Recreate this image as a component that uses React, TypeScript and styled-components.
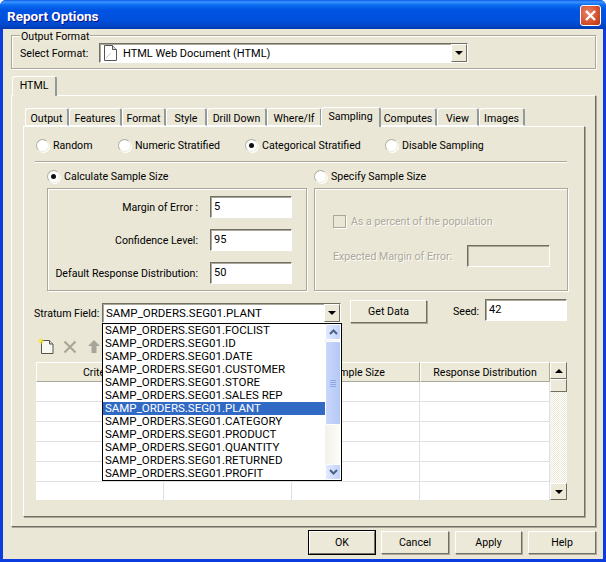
import React from 'react';
import styled, { createGlobalStyle } from 'styled-components';

const GlobalStyle = createGlobalStyle`
  html, body {
    margin: 0;
    padding: 0;
    background: #fff;
  }
  * {
    box-sizing: border-box;
  }
`;

const Face = '#ece9d8';
const Texture = `repeating-conic-gradient(#ece9d8 0 25%, #e8e5d4 0 50%) 0 0 / 2px 2px`;

const Window = styled.div`
  width: 606px;
  height: 562px;
  display: flex;
  flex-direction: column;
  font-family: Roboto, 'Liberation Sans', Arial, sans-serif;
  font-size: 10.6px;
  color: #000;
  overflow: hidden;
  background: #0a3ce0;
  border-radius: 6px 6px 0 0;
`;

const TitleBar = styled.div`
  height: 29px;
  flex: none;
  display: flex;
  align-items: center;
  justify-content: space-between;
  padding: 2px 5px 0 7px;
  background: linear-gradient(180deg, #0a5ae6 0, #3d95ff 2px, #0a6cf0 5px, #0054e3 10px, #0050dc 20px, #0046c8 26px, #0038b0 29px);
`;

const Title = styled.span`
  color: #fff;
  font-weight: 700;
  font-size: 13.5px;
  text-shadow: 1px 1px 0 #0f1089;
`;

const CloseButton = styled.button`
  width: 21px;
  height: 21px;
  padding: 0;
  display: flex;
  align-items: center;
  justify-content: center;
  border: 1px solid #fff;
  border-radius: 3px;
  background: radial-gradient(circle at 35% 35%, #e8836a 0, #d8532f 55%, #b63414 100%);
`;

const Body = styled.div`
  flex: 1;
  margin: 0 3px 3px;
  padding: 6px 7px 0 8px;
  background: ${Texture};
  display: flex;
  flex-direction: column;
`;

const Group = styled.div<{ $width?: number; $height: number }>`
  position: relative;
  width: ${({ $width }) => ($width ? `${$width}px` : 'auto')};
  height: ${({ $height }) => $height}px;
  border: 1px solid #aca899;
  box-shadow: inset 1px 1px 0 #fff, 1px 1px 0 #fff;
`;

const Legend = styled.span`
  position: absolute;
  left: 8px;
  top: -6px;
  padding: 0 1px;
  background: ${Face};
  line-height: 13px;
`;

const FormatRow = styled.div`
  height: 100%;
  display: flex;
  align-items: center;
  padding: 2px 0 0 8px;
`;

const FormatLabel = styled.span`
  width: 79px;
  flex: none;
`;

const Combo = styled.div<{ $width: number; $height: number }>`
  width: ${({ $width }) => $width}px;
  height: ${({ $height }) => $height}px;
  flex: none;
  display: flex;
  align-items: center;
  font-size: 11px;
  background: #fff;
  border: 1px solid;
  border-color: #716f64 #fff #fff #716f64;
  box-shadow: inset 1px 1px 0 #aca899;
  padding-left: 3px;
  white-space: nowrap;
`;

const StratumCombo = styled(Combo)`
  margin-top: 4px;
  font-size: 11.5px;
`;

const ComboText = styled.span`
  flex: 1;
  overflow: hidden;
`;

const ComboArrow = styled.span`
  width: 16px;
  height: 100%;
  flex: none;
  display: flex;
  align-items: center;
  justify-content: center;
  background: ${Face};
  border: 1px solid;
  border-color: #fff #716f64 #716f64 #fff;
`;

const Triangle = styled.span<{ $up?: boolean }>`
  width: 0;
  height: 0;
  border-left: 4px solid transparent;
  border-right: 4px solid transparent;
  ${({ $up }) => ($up ? 'border-bottom: 4px solid #000;' : 'border-top: 4px solid #000;')}
`;

const DocSlot = styled.span`
  display: flex;
  margin: 0 6px 0 1px;
`;

const TabStrip = styled.div<{ $height: number; $left: number }>`
  height: ${({ $height }) => $height}px;
  flex: none;
  display: flex;
  align-items: flex-end;
  padding-left: ${({ $left }) => $left}px;
  position: relative;
  z-index: 1;
`;

const Tab = styled.div<{ $active?: boolean; $width: number }>`
  width: ${({ $width }) => $width}px;
  height: ${({ $active }) => ($active ? 20 : 18)}px;
  flex: none;
  margin-right: ${({ $active }) => ($active ? -1 : 0)}px;
  margin-left: ${({ $active }) => ($active ? -1 : 0)}px;
  margin-bottom: ${({ $active }) => ($active ? -1 : 0)}px;
  display: flex;
  align-items: center;
  justify-content: center;
  padding: ${({ $active }) => ($active ? '0 0 2px' : '2px 0 0')};
  background: ${Texture};
  border: 1px solid #fff;
  border-bottom: ${({ $active }) => ($active ? 'none' : '1px solid #fff')};
  border-right: 2px solid #919b9c;
  border-radius: 3px 3px 0 0;
  position: relative;
  z-index: ${({ $active }) => ($active ? 2 : 0)};
`;

const OuterPane = styled.div`
  height: 432px;
  flex: none;
  padding: 12px 10px 0 11px;
  border: 1px solid;
  border-color: #fff #716f64 #716f64 #fff;
  box-shadow: 1px 1px 0 #aca899;
`;

const InnerPane = styled.div`
  height: 391px;
  padding: 9px 17px 0 11px;
  border: 1px solid;
  border-color: #fff #716f64 #716f64 #fff;
  box-shadow: 1px 1px 0 #aca899;
`;

const RadioRow = styled.div`
  height: 21px;
  display: flex;
  align-items: center;
  padding: 0 0 2px 1px;
`;

const RadioItem = styled.label<{ $width?: number }>`
  width: ${({ $width }) => ($width ? `${$width}px` : 'auto')};
  display: flex;
  align-items: center;
  gap: 4px;
  white-space: nowrap;
`;

const RadioDot = styled.span<{ $checked?: boolean }>`
  width: 13px;
  height: 13px;
  flex: none;
  border-radius: 50%;
  display: flex;
  align-items: center;
  justify-content: center;
  background: #fff;
  border: 1px solid #b0ae9f;
  border-right-color: #ece9d8;
  border-bottom-color: #ece9d8;
  box-shadow: 1px 1px 0 #fff;
  &::after {
    content: '';
    width: 5px;
    height: 5px;
    border-radius: 50%;
    background: ${({ $checked }) => ($checked ? '#111' : 'transparent')};
  }
`;

const Rule = styled.div`
  height: 2px;
  margin-top: 4px;
  background: #aca899;
  border-bottom: 1px solid #fff;
`;

const Columns = styled.div`
  display: flex;
  gap: 7px;
  margin: 6px 0 0 12px;
`;

const Column = styled.div`
  display: flex;
  flex-direction: column;
`;

const SizeHead = styled.div`
  height: 19px;
  display: flex;
  align-items: center;
  padding-bottom: 4px;
`;

const FieldStack = styled.div`
  height: 100%;
  display: flex;
  flex-direction: column;
  gap: 11px;
  padding: 7px 14px 0 0;
  align-items: flex-end;
`;

const FieldRow = styled.div`
  display: flex;
  align-items: center;
  gap: 12px;
`;

const Input = styled.div<{ $width: number; $height: number; $disabled?: boolean }>`
  width: ${({ $width }) => $width}px;
  height: ${({ $height }) => $height}px;
  flex: none;
  padding: 0 0 2px 3px;
  display: flex;
  align-items: center;
  font-size: 11px;
  background: ${({ $disabled }) => ($disabled ? 'transparent' : '#fff')};
  border: 1px solid;
  border-color: #716f64 #fff #fff #716f64;
  box-shadow: inset 1px 1px 0 #aca899;
`;

const DisabledStack = styled.div`
  height: 100%;
  display: flex;
  flex-direction: column;
  padding: 26px 0 0 18px;
  gap: 17px;
  color: #aca899;
  text-shadow: 1px 1px 0 #fff;
`;

const CheckRow = styled.div`
  display: flex;
  align-items: center;
  gap: 5px;
`;

const CheckBox = styled.span`
  width: 13px;
  height: 13px;
  border: 1px solid #aca899;
  box-shadow: 1px 1px 0 #fff;
`;

const ExpectedRow = styled.div`
  display: flex;
  align-items: center;
`;

const ExpectedLabel = styled.span`
  width: 134px;
  flex: none;
`;

const StratumRow = styled.div`
  position: relative;
  height: 24px;
  margin: 8px 0 0 -1px;
  display: flex;
  align-items: flex-start;
`;

const StratumLabel = styled.span`
  width: 68px;
  flex: none;
  margin-top: 8px;
`;

const PushButton = styled.button<{ $width: number; $default?: boolean }>`
  width: ${({ $width }) => $width}px;
  height: 23px;
  flex: none;
  padding: 0;
  font: inherit;
  color: #000;
  background: ${Face};
  border: 1px solid;
  border-color: #fff #716f64 #716f64 #fff;
  box-shadow: 1px 1px 0 #aca899;
  ${({ $default }) => ($default ? 'outline: 1px solid #000;' : '')}
`;

const GetData = styled(PushButton)`
  margin: 1px 26px 0 9px;
`;

const SeedLabel = styled.span`
  width: 32px;
  flex: none;
  margin-top: 6px;
`;

const DropList = styled.div`
  position: absolute;
  left: 68px;
  top: 24px;
  width: 240px;
  height: 158px;
  display: flex;
  font-size: 11.5px;
  background: #fff;
  border: 1px solid #000;
  z-index: 5;
`;

const DropItems = styled.div`
  flex: 1;
  min-width: 0;
`;

const DropItem = styled.div<{ $selected?: boolean }>`
  height: 13px;
  line-height: 13px;
  padding-left: 2px;
  white-space: nowrap;
  overflow: hidden;
  color: ${({ $selected }) => ($selected ? '#fff' : '#000')};
  background: ${({ $selected }) => ($selected ? '#316ac5' : 'transparent')};
`;

const ListScroll = styled.div`
  width: 16px;
  flex: none;
  display: flex;
  flex-direction: column;
  background: linear-gradient(90deg, #f3f1ec, #fdfdfa);
`;

const ScrollBtn = styled.div`
  height: 16px;
  flex: none;
  display: flex;
  align-items: center;
  justify-content: center;
  border: 1px solid #fff;
  border-radius: 2px;
  background: linear-gradient(90deg, #e1eafe, #c3d3fd);
`;

const ScrollThumb = styled.div`
  height: 84px;
  flex: none;
  display: flex;
  flex-direction: column;
  align-items: center;
  justify-content: center;
  gap: 1px;
  margin-top: 1px;
  border: 1px solid #fff;
  border-radius: 2px;
  background: linear-gradient(90deg, #c9d7fb, #b4c8f6);
`;

const Grip = styled.span`
  width: 6px;
  height: 1px;
  background: #8ea7e0;
`;

const ScrollFill = styled.div`
  flex: 1;
`;

const Toolbar = styled.div`
  height: 39px;
  display: flex;
  align-items: flex-start;
  padding: 15px 0 0 3px;
`;

const ToolSlot = styled.span<{ $width: number; $top: number }>`
  width: ${({ $width }) => $width}px;
  padding-top: ${({ $top }) => $top}px;
  display: flex;
  flex: none;
`;

const TableWrap = styled.div`
  display: flex;
  margin-left: 1px;
`;

const Table = styled.div`
  width: 514px;
  height: 138px;
  flex: none;
  display: grid;
  grid-template-columns: 128px 128px 128px 130px;
  grid-template-rows: repeat(7, 20px);
  background: #fff;
`;

const HeadCell = styled.div`
  height: 20px;
  display: flex;
  align-items: center;
  justify-content: center;
  overflow: hidden;
  white-space: nowrap;
  background: ${Face};
  border: 1px solid;
  border-color: #fff #aca899 #aca899 #fff;
`;

const Cell = styled.div`
  border-right: 1px solid #e0dfe3;
  border-bottom: 1px solid #e0dfe3;
  &:nth-last-child(-n + 4) {
    border-bottom: none;
  }
`;

const GridScroll = styled.div`
  width: 17px;
  height: 138px;
  flex: none;
  display: flex;
  flex-direction: column;
  background: repeating-conic-gradient(#fff 0 25%, #ece9d8 0 50%) 0 0 / 2px 2px;
`;

const GridScrollBtn = styled.div<{ $push?: boolean }>`
  height: ${({ $push }) => ($push ? 13 : 17)}px;
  flex: none;
  display: flex;
  align-items: center;
  justify-content: center;
  background: ${Face};
  border: 1px solid;
  border-color: #fff #716f64 #716f64 #fff;
`;

const GridScrollThumb = styled(GridScrollBtn)`
  margin-bottom: auto;
`;

const Footer = styled.div`
  display: flex;
  justify-content: flex-end;
  gap: 6px;
  margin-top: 4px;
`;

const FormatIcon = () => (
  <svg width="13" height="16" viewBox="0 0 13 16">
    <path d="M0.5 0.5H8.5L12.5 4.5V15.5H0.5Z" fill="#fff" stroke="#555" />
    <path d="M8.5 0.5V4.5H12.5" fill="#ddd" stroke="#555" />
    <path d="M2 13L7 8" stroke="#ccc" />
  </svg>
);

const NewRowIcon = () => (
  <svg width="16" height="16" viewBox="0 0 16 16">
    <path d="M3.5 2.5H11.5L15 6V15.5H3.5Z" fill="#f8f8f0" stroke="#55554c" />
    <path d="M11.5 2.5V6H15" fill="#d8d8d0" stroke="#55554c" />
    <path d="M3 0V6M0 3H6M1 1L5 5M5 1L1 5" stroke="#f4e43c" />
  </svg>
);

const DeleteIcon = () => (
  <svg width="14" height="14" viewBox="0 0 14 14">
    <path d="M1.5 1.5L12.5 12.5M12.5 1.5L1.5 12.5" stroke="#a8a698" strokeWidth="2.2" />
  </svg>
);

const UpIcon = () => (
  <svg width="12" height="13" viewBox="0 0 12 13">
    <path d="M6 0L12 6H8.5V13H3.5V6H0Z" fill="#a8a698" />
  </svg>
);

const CloseGlyph = () => (
  <svg width="13" height="13" viewBox="0 0 13 13">
    <path d="M2 2L11 11M11 2L2 11" stroke="#fff" strokeWidth="2.4" />
  </svg>
);

const Chevron = ({ up }: { up?: boolean }) => (
  <svg width="9" height="6" viewBox="0 0 9 6">
    <path d={up ? 'M1 5L4.5 1.5L8 5' : 'M1 1L4.5 4.5L8 1'} fill="none" stroke="#4d6185" strokeWidth="2" />
  </svg>
);

const tabs = [
  { label: 'Output', width: 44 },
  { label: 'Features', width: 53 },
  { label: 'Format', width: 44 },
  { label: 'Style', width: 41 },
  { label: 'Drill Down', width: 60 },
  { label: 'Where/If', width: 55 },
  { label: 'Sampling', width: 60, active: true },
  { label: 'Computes', width: 57 },
  { label: 'View', width: 42 },
  { label: 'Images', width: 46 },
];

const fields = [
  'FOCLIST',
  'ID',
  'DATE',
  'CUSTOMER',
  'STORE',
  'SALES REP',
  'PLANT',
  'CATEGORY',
  'PRODUCT',
  'QUANTITY',
  'RETURNED',
  'PROFIT',
];

const columns = ['Criteria', 'Category', 'Sample Size', 'Response Distribution'];

const App: React.FC = () => {
  return (
    <Window>
      <GlobalStyle />
      <TitleBar>
        <Title>Report Options</Title>
        <CloseButton>
          <CloseGlyph />
        </CloseButton>
      </TitleBar>
      <Body>
        <Group $height={34}>
          <Legend>Output Format</Legend>
          <FormatRow>
            <FormatLabel>Select Format:</FormatLabel>
            <Combo $width={369} $height={20}>
              <DocSlot>
                <FormatIcon />
              </DocSlot>
              <ComboText>HTML Web Document (HTML)</ComboText>
              <ComboArrow>
                <Triangle />
              </ComboArrow>
            </Combo>
          </FormatRow>
        </Group>

        <TabStrip $height={26} $left={2}>
          <Tab $active $width={45}>HTML</Tab>
        </TabStrip>
        <OuterPane>
          <TabStrip $height={18} $left={2}>
            {tabs.map((tab) => (
              <Tab key={tab.label} $active={tab.active} $width={tab.width}>
                {tab.label}
              </Tab>
            ))}
          </TabStrip>
          <InnerPane>
            <RadioRow>
              <RadioItem $width={82}><RadioDot />Random</RadioItem>
              <RadioItem $width={127}><RadioDot />Numeric Stratified</RadioItem>
              <RadioItem $width={140}><RadioDot $checked />Categorical Stratified</RadioItem>
              <RadioItem><RadioDot />Disable Sampling</RadioItem>
            </RadioRow>
            <Rule />
            <Columns>
              <Column>
                <SizeHead>
                  <RadioItem><RadioDot $checked />Calculate Sample Size</RadioItem>
                </SizeHead>
                <Group $width={260} $height={103}>
                  <FieldStack>
                    <FieldRow>Margin of Error :<Input $width={82} $height={22}>5</Input></FieldRow>
                    <FieldRow>Confidence Level:<Input $width={82} $height={22}>95</Input></FieldRow>
                    <FieldRow>Default Response Distribution:<Input $width={82} $height={22}>50</Input></FieldRow>
                  </FieldStack>
                </Group>
              </Column>
              <Column>
                <SizeHead>
                  <RadioItem><RadioDot />Specify Sample Size</RadioItem>
                </SizeHead>
                <Group $width={254} $height={103}>
                  <DisabledStack>
                    <CheckRow><CheckBox />As a percent of the population</CheckRow>
                    <ExpectedRow>
                      <ExpectedLabel>Expected Margin of Error:</ExpectedLabel>
                      <Input $width={83} $height={22} $disabled />
                    </ExpectedRow>
                  </DisabledStack>
                </Group>
              </Column>
            </Columns>

            <StratumRow>
              <StratumLabel>Stratum Field:</StratumLabel>
              <StratumCombo $width={239} $height={20}>
                <ComboText>SAMP_ORDERS.SEG01.PLANT</ComboText>
                <ComboArrow>
                  <Triangle />
                </ComboArrow>
              </StratumCombo>
              <GetData $width={77}>Get Data</GetData>
              <SeedLabel>Seed:</SeedLabel>
              <Input $width={82} $height={22}>42</Input>
              <DropList>
                <DropItems>
                  {fields.map((field) => (
                    <DropItem key={field} $selected={field === 'PLANT'}>
                      SAMP_ORDERS.SEG01.{field}
                    </DropItem>
                  ))}
                </DropItems>
                <ListScroll>
                  <ScrollBtn><Chevron up /></ScrollBtn>
                  <ScrollThumb>
                    <Grip /><Grip /><Grip /><Grip />
                  </ScrollThumb>
                  <ScrollFill />
                  <ScrollBtn><Chevron /></ScrollBtn>
                </ListScroll>
              </DropList>
            </StratumRow>

            <Toolbar>
              <ToolSlot $width={25} $top={0}><NewRowIcon /></ToolSlot>
              <ToolSlot $width={25} $top={2}><DeleteIcon /></ToolSlot>
              <ToolSlot $width={12} $top={2}><UpIcon /></ToolSlot>
            </Toolbar>
            <TableWrap>
              <Table>
                {columns.map((column) => (
                  <HeadCell key={column}>{column}</HeadCell>
                ))}
                {Array.from({ length: 24 }, (_, i) => (
                  <Cell key={i} />
                ))}
              </Table>
              <GridScroll>
                <GridScrollBtn><Triangle $up /></GridScrollBtn>
                <GridScrollThumb $push />
                <GridScrollBtn><Triangle /></GridScrollBtn>
              </GridScroll>
            </TableWrap>
          </InnerPane>
        </OuterPane>
        <Footer>
          <PushButton $default $width={66}>OK</PushButton>
          <PushButton $width={68}>Cancel</PushButton>
          <PushButton $width={67}>Apply</PushButton>
          <PushButton $width={68}>Help</PushButton>
        </Footer>
      </Body>
    </Window>
  );
};

export default App;
